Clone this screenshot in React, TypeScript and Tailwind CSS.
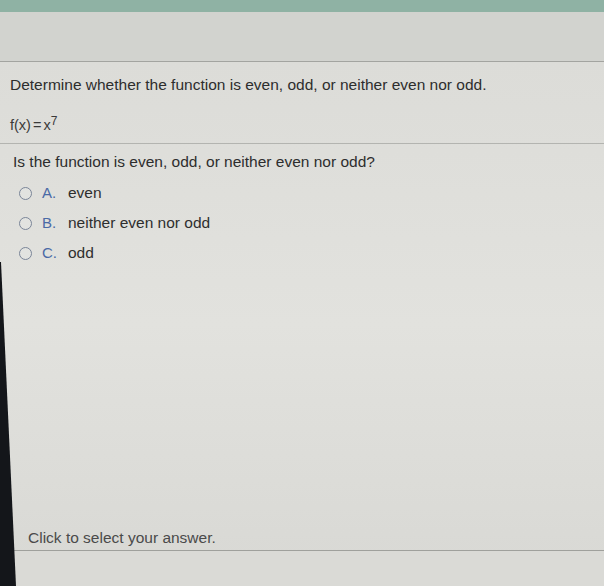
import React from "react";

const Radio = ({ letter, text }: { letter: string; text: string }) => (
  <div className="flex items-center h-[30px]">
    <span className="w-[13px] h-[13px] rounded-full border border-[#7a8598] bg-[#e2e3e0] ml-[19px]" />
    <span className="ml-[10px] w-[26px] text-[#4a6aa6] text-[15px]">{letter}.</span>
    <span className="text-[#2e2e2e] text-[15.5px]">{text}</span>
  </div>
);

export default function App() {
  return (
    <div
      className="relative w-[604px] h-[586px] overflow-hidden bg-[#d9d9d5] flex flex-col"
      style={{ fontFamily: '"Liberation Sans", Arial, sans-serif' }}
    >
      <div className="h-[12px] bg-[#8fb2a4] shrink-0" />
      <div className="h-[50px] bg-[#d2d3cf] shrink-0 border-b border-[#a3a4a0]" />
      <div className="flex-1 flex flex-col bg-gradient-to-b from-[#dcdcd8] via-[#e2e2de] to-[#d8d8d4]">
        <div className="pl-[10px] pt-[13px] text-[15.5px] leading-[20px] text-[#2d2d2d]">
          Determine whether the function is even, odd, or neither even nor odd.
        </div>
        <div className="pl-[10px] pt-[20px] pb-[8px] text-[14.5px] leading-[20px] text-[#3a3a3a] border-b border-[#b3b4b0]">
          f(x)<span className="mx-[2px]">=</span>x<sup className="text-[12px] relative -top-[5px]">7</sup>
        </div>
        <div className="pl-[13px] pt-[8px] text-[15.5px] leading-[20px] text-[#2d2d2d]">
          Is the function is even, odd, or neither even nor odd?
        </div>
        <div className="pt-[6px] flex flex-col">
          <Radio letter="A" text="even" />
          <Radio letter="B" text="neither even nor odd" />
          <Radio letter="C" text="odd" />
        </div>
        <div className="flex-1" />
        <div className="pl-[28px] pb-[2px] text-[15.5px] leading-[20px] text-[#4a4a4a] border-b border-[#9fa09c]">
          Click to select your answer.
        </div>
        <div className="h-[35px] bg-[#dadad6]" />
      </div>
      <svg className="absolute left-0 top-0 pointer-events-none" width="604" height="586">
        <polygon points="0,262 1,262 16,586 0,586" fill="#14161a" />
      </svg>
    </div>
  );
}
